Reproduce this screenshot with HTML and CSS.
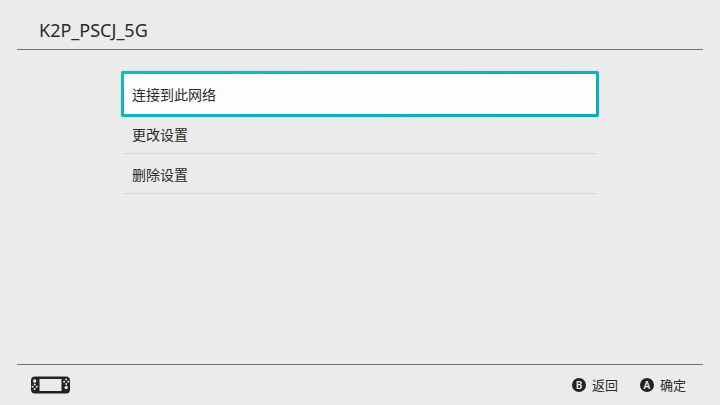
FILE: index.html
```html
<!DOCTYPE html>
<html lang="zh-CN">
<head>
    <meta charset="UTF-8">
    <meta name="viewport" content="width=device-width, initial-scale=1.0">
    <title>K2P_PSCJ_5G</title>
    <link rel="stylesheet" href="styles.css">
</head>
<body>
    <header class="header">
        <h1>K2P_PSCJ_5G</h1>
    </header>

    <main class="content">
        <ul class="menu">
            <li><button type="button" class="menu-item selected">连接到此网络</button></li>
            <li><button type="button" class="menu-item">更改设置</button></li>
            <li><button type="button" class="menu-item">删除设置</button></li>
        </ul>
    </main>

    <footer class="footer">
        <svg class="console" width="39" height="18" viewBox="0 0 39 18" aria-hidden="true">
            <path fill="#222" fill-rule="evenodd" d="M4 0.5H35a4 4 0 0 1 4 4V13.500a4 4 0 0 1-4 4H4a4 4 0 0 1-4-4V4.500a4 4 0 0 1 4-4zM8.500 3V15H30.500V3z"/>
            <g fill="#ebebeb">
                <circle cx="3.700" cy="5" r="1.700"/>
                <circle cx="3.700" cy="8.600" r="1"/>
                <circle cx="3.700" cy="13" r="1"/>
                <circle cx="1.600" cy="10.800" r="1"/>
                <circle cx="5.800" cy="10.800" r="1"/>
                <circle cx="35.200" cy="3.500" r="1"/>
                <circle cx="35.200" cy="7.900" r="1"/>
                <circle cx="33.100" cy="5.700" r="1"/>
                <circle cx="37.300" cy="5.700" r="1"/>
                <circle cx="35.200" cy="11.500" r="1.700"/>
            </g>
        </svg>
        <div class="hints">
            <button type="button" class="hint"><span class="key">B</span>返回</button>
            <button type="button" class="hint"><span class="key">A</span>确定</button>
        </div>
    </footer>
</body>
</html>
```

FILE: styles.css
```css
* {
    box-sizing: border-box;
}
body {
    font-family: "Noto Sans", "Noto Sans CJK SC", sans-serif;
    background: #ebebeb;
    color: #2a2a2a;
    margin: 0;
    padding: 0 17px;
    display: flex;
    flex-direction: column;
    min-height: 100vh;
}
button {
    font-family: "Noto Sans CJK SC", sans-serif;
    color: inherit;
    background: none;
    border: none;
    padding: 0;
    cursor: pointer;
}
.header {
    padding: 18px 22px 7px;
    border-bottom: 1px solid #707070;
}
.header h1 {
    margin: 0;
    font-size: 18px;
    line-height: 24px;
    font-weight: 400;
}
.content {
    flex: 1;
    padding: 24px 0;
}
.menu {
    list-style: none;
    max-width: 472px;
    margin: 0 auto;
    padding: 0;
}
.menu li {
    display: flex;
    height: 40px;
    border-bottom: 1px solid #d6d6d6;
}
.menu-item {
    flex: 1;
    padding: 0 8px;
    font-size: 14px;
    line-height: 20px;
    text-align: left;
}
.menu li:first-child {
    border-bottom: none;
}
/* Focus frame sits just outside the row */
.menu-item.selected {
    margin: -3px;
    border: 3px solid transparent;
    border-radius: 2px;
    background: linear-gradient(#fdfdfd, #fdfdfd) padding-box,
        linear-gradient(to bottom right, #10bcb4, #18a6b6) border-box;
    box-shadow: 0 0 2px #8fe0e0, inset 0 0 1px #8ff0ee;
}
.footer {
    display: flex;
    justify-content: space-between;
    align-items: center;
    height: 41px;
    padding: 0 17px 0 14px;
    border-top: 1px solid #707070;
}
.hints {
    display: flex;
    gap: 22px;
}
.hint {
    display: flex;
    align-items: center;
    gap: 6px;
    font-size: 13px;
    line-height: 20px;
}
.key {
    width: 14px;
    height: 14px;
    border-radius: 50%;
    background: #222;
    color: #ebebeb;
    font-family: "Noto Sans", sans-serif;
    font-size: 10px;
    font-weight: 600;
    line-height: 14px;
    text-align: center;
}
```
